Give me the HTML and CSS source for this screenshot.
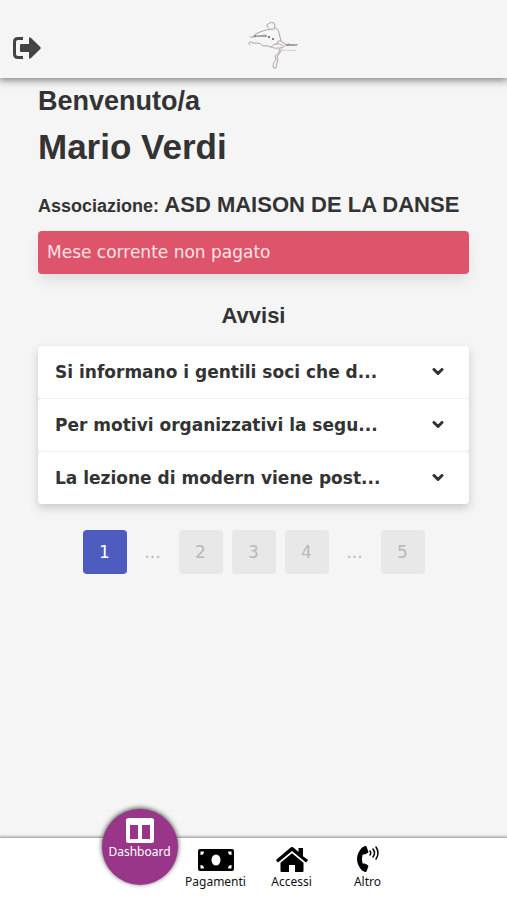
FILE: index.html
```html
<!DOCTYPE html>
<html lang="it">
<head>
    <meta charset="UTF-8">
    <meta name="viewport" content="width=device-width, initial-scale=1.0">
    <title>Dashboard</title>
    <link rel="stylesheet" href="styles.css">
</head>
<body>

<header class="topbar">
    <button type="button" class="logout" aria-label="Esci">
        <svg width="28" height="22" viewBox="0 0 28 22">
            <path d="M10 1.500H5Q1.500 1.500 1.500 5V17Q1.500 20.500 5 20.500H10" fill="none" stroke="#444" stroke-width="3"/>
            <path d="M8 7h8V1.500q0-2 1.800-.8l9.500 9.300q.8 1 0 2l-9.500 9.300q-1.800 1.200-1.800-.8V15H8q-1 0-1-1V8q0-1 1-1z" fill="#444"/>
        </svg>
    </button>
    <svg class="logo" width="60" height="50" viewBox="0 0 60 50" role="img" aria-label="Scuola Danse">
        <g fill="none" stroke="#aaa4a8" stroke-linecap="round">
            <path d="M21 8q-4-2-1-4 4-3 6-1 2 3 0 5 4 0 5 5l2 8"/>
            <path d="M26 9q-8 0-14 3-5 1-7 5M2 17q3 1 6-1"/>
            <path d="M2 25q-3-3 1-3 3 2 6 1 4 0 6 3 4-1 8 1"/>
            <path d="M34 29q-2 4-5 8 2 3 0 6l-1 5q-3 1-3-2 0-4 3-6l-1-4q4-2 5-7"/>
        </g>
        <path d="M23 27q2-3 6-3l1-3q4-1 5 2l3 1q-2 4-6 4-5 1-9-1M27 24q4-2 8 2" fill="none" stroke="#bba3b6"/>
        <g fill="#555">
            <circle cx="21" cy="17" r="1"/>
            <circle cx="25" cy="19" r="1"/>
            <text class="logo-name" x="6" y="17">scuola</text>
            <text class="logo-name" x="38" y="26">danse</text>
            <text class="logo-sub" x="35" y="31">di Vera Milano</text>
        </g>
    </svg>
</header>

<main class="container">
    <h2 class="welcome">Benvenuto/a</h2>
    <h1 class="user">Mario Verdi</h1>
    <h3 class="club"><span class="club-label">Associazione:</span> ASD MAISON DE LA DANSE</h3>

    <div class="alert">Mese corrente non pagato</div>

    <h3 class="title">Avvisi</h3>
    <div class="notices">
        <button type="button" class="notice">
            <span>Si informano i gentili soci che d...</span>
            <svg class="chevron" width="12" height="8" viewBox="0 0 12 8"><path d="M2 1.500 6 5.500l4-4"/></svg>
        </button>
        <button type="button" class="notice">
            <span>Per motivi organizzativi la segu...</span>
            <svg class="chevron" width="12" height="8" viewBox="0 0 12 8"><path d="M2 1.500 6 5.500l4-4"/></svg>
        </button>
        <button type="button" class="notice">
            <span>La lezione di modern viene post...</span>
            <svg class="chevron" width="12" height="8" viewBox="0 0 12 8"><path d="M2 1.500 6 5.500l4-4"/></svg>
        </button>
    </div>

    <nav class="pages" aria-label="Pagine">
        <button type="button" class="page active">1</button>
        <span class="dots">...</span>
        <button type="button" class="page">2</button>
        <button type="button" class="page">3</button>
        <button type="button" class="page">4</button>
        <span class="dots">...</span>
        <button type="button" class="page">5</button>
    </nav>
</main>

<nav class="bottombar">
    <a href="#dashboard" class="tab current">
        <svg width="28" height="25" viewBox="0 0 28 25">
            <path fill="#fff" fill-rule="evenodd" d="M2.500 0h23Q28 0 28 2.500v20q0 2.500-2.500 2.500h-23Q0 25 0 22.500v-20Q0 0 2.500 0zM4 7v14h8V7zM16 7v14H24V7z"/>
        </svg>
        Dashboard
    </a>
    <a href="#pagamenti" class="tab">
        <svg width="36" height="26" viewBox="0 0 36 26">
            <rect y="2" width="36" height="22" rx="2"/>
            <ellipse cx="18" cy="13" rx="4.500" ry="5.500" fill="#fff"/>
            <path fill="#fff" d="M2.500 8V4.500H6Q6 8 2.500 8zM33.500 8V4.500H30q0 3.500 3.500 3.500zM2.500 18v3.500H6Q6 18 2.500 18zM33.500 18v3.500H30q0-3.500 3.500-3.500z"/>
        </svg>
        Pagamenti
    </a>
    <a href="#accessi" class="tab">
        <svg width="32" height="26" viewBox="0 0 32 26">
            <path d="M16 0q1 0 2 1l4.500 4V1H27v8.200l4.500 3.400q.7.600.1 1.200l-1 1.100q-.6.600-1.200 0L16 4 2.600 15q-.6.600-1.200 0l-1-1.200q-.6-.600.1-1.200L14 1q1-1 2-1z"/>
            <path d="M16 6.300 27.500 15.700V24q0 1-1 1H19v-7h-6v7H5.500q-1 0-1-1v-8.300z"/>
        </svg>
        Accessi
    </a>
    <a href="#altro" class="tab">
        <svg width="24" height="28" viewBox="0 0 24 28">
            <path d="M6 2.500 9 1q1-.4 1.500.6l1.800 4.800q.3 1-.6 1.500L8.500 9.500H6.600q-1.400 4.500 0 9h1.900l3.200 1.600q.9.500.6 1.500l-1.800 4.800Q10 27.400 9 27l-3-1.500Q1 20 1 14T6 2.500z"/>
            <g fill="none" stroke="#000" stroke-width="1.500" stroke-linecap="round">
                <path d="M14 6q1.500 2 0 4M17 4q3 4 0 8M20 2q4 6 0 12"/>
            </g>
        </svg>
        Altro
    </a>
</nav>

</body>
</html>
```
FILE: styles.css
```css
* {
    box-sizing: border-box;
}
body {
    display: flex;
    flex-direction: column;
    min-height: 100vh;
    margin: 0;
    background-color: #f5f5f5;
    color: #333;
    font-family: "DejaVu Sans", Verdana, sans-serif;
    font-size: 17px;
}
h1, h2, h3 {
    margin: 0;
    font-family: "Liberation Sans", Arial, sans-serif;
    font-weight: bold;
}
button {
    border: none;
    font: inherit;
    cursor: pointer;
}

/* Top bar */
.topbar {
    display: grid;
    grid-template-columns: 1fr auto 1fr;
    align-items: end;
    height: 78px;
    padding: 8px 13px;
    box-shadow: 0 1px 8px 1px #777;
    background-color: #f5f5f5;
}
.logout {
    display: flex;
    justify-self: start;
    padding: 0;
    margin-bottom: 11px;
    background: none;
}
.logo {
    margin-left: 48px;
}
.logo-name {
    font: italic bold 4px "Liberation Sans", sans-serif;
}
.logo-sub {
    font: italic 2px "Liberation Sans", sans-serif;
    fill: #a7a;
}

/* Content */
.container {
    flex: 1;
    padding: 8px 38px 0;
}
.welcome {
    font-size: 27px;
    line-height: 30px;
}
.user {
    margin-top: 10px;
    font-size: 35px;
    line-height: 42px;
}
.club {
    margin-top: 22px;
    font-size: 22px;
    line-height: 30px;
}
.club-label {
    font-size: 18px;
}
.alert {
    margin-top: 10px;
    padding: 0 9px;
    border-radius: 4px;
    background-color: #de546a;
    box-shadow: 0 8px 16px -2px rgba(0, 0, 0, 0.1);
    color: #ffe3e5;
    line-height: 43px;
}
.title {
    margin-top: 27px;
    font-size: 22px;
    line-height: 30px;
    text-align: center;
}
.notices {
    display: flex;
    flex-direction: column;
    gap: 1px;
    margin-top: 15px;
    border-radius: 4px;
    background-color: #f0f0f0;
    box-shadow: 0 4px 10px rgba(0, 0, 0, 0.18);
}
.notice {
    display: flex;
    align-items: center;
    justify-content: space-between;
    height: 52px;
    padding: 0 25px 0 17px;
    border-radius: 4px;
    background-color: #fff;
    color: #333;
    font-weight: bold;
}
.chevron {
    fill: none;
    stroke: #333;
    stroke-width: 3;
    stroke-linecap: round;
    stroke-linejoin: round;
}

/* Pagination */
.pages {
    display: flex;
    justify-content: center;
    gap: 9px;
    margin-top: 26px;
}
.page {
    width: 44px;
    height: 44px;
    padding: 0;
    border-radius: 4px;
    background-color: #e8e8e8;
    color: #b8b8b8;
}
.page.active {
    background-color: #4e5bbf;
    color: #fff;
}
.dots {
    width: 34px;
    color: #b8b8b8;
    line-height: 44px;
    text-align: center;
}

/* Bottom bar */
.bottombar {
    display: flex;
    justify-content: center;
    height: 62px;
    background-color: #fff;
    box-shadow: 0 0 3px 1px #888;
}
.tab {
    display: flex;
    flex-direction: column;
    align-items: center;
    justify-content: end;
    gap: 2px;
    width: 76px;
    padding-bottom: 11px;
    color: #111;
    font-size: 12px;
    line-height: 14px;
    font-family: "Noto Sans", sans-serif;
    text-decoration: none;
}
.tab.current {
    justify-content: start;
    height: 76px;
    margin-top: -29px;
    padding: 9px 0 0;
    border-radius: 50%;
    background-color: #993689;
    box-shadow: 0 -1px 5px #444;
    color: #fff;
}
```
